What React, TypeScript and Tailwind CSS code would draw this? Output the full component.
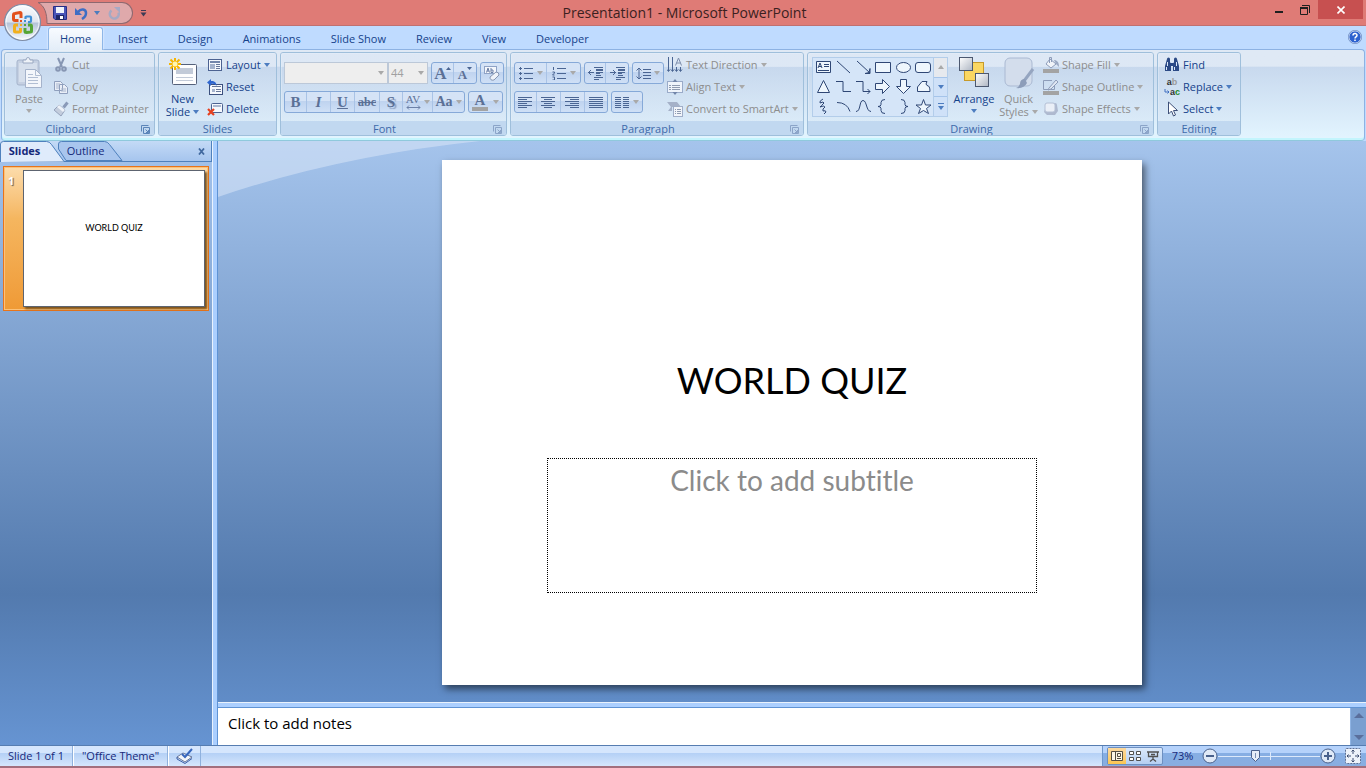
import { ReactNode } from "react";

const ink = "#4a6593";
const gray = "#8f9bb0";

function Caret({ color = "#4d7dc0" }: { color?: string }) {
  return (
    <svg width="6" height="4" viewBox="0 0 6 4" className="shrink-0">
      <path d="M0 0h6L3 4z" fill={color} />
    </svg>
  );
}

function Launcher({ color = "#8ba4c8" }: { color?: string }) {
  return (
    <svg width="9" height="9" viewBox="0 0 9 9" fill="none" stroke={color}>
      <path d="M.5 6.500V.5h7M2.500 8.500v-6h6v6zM4.500 4.500l3 3M7.500 5v2.500H5" />
    </svg>
  );
}

const icons: Record<string, ReactNode> = {
  cut: (
    <g fill="none" stroke="#8796b3" strokeWidth="2">
      <path d="M5 1l4 9M11 1L7 10" />
      <circle cx="5" cy="12" r="1.800" />
      <circle cx="11" cy="12" r="1.800" />
    </g>
  ),
  copy: (
    <g fill="#e9eef7" stroke="#8f9fbd">
      <path d="M1.500 2.500h6l2 2v7h-8zM6.500 5.500h5l3 3v6h-8z" />
      <path d="M3 5h4M3 7h3M3 9h3M8 10h5M8 12h5" stroke="#a9b6cd" />
    </g>
  ),
  painter: (
    <g>
      <path d="M14.500 1.500l-4 5" stroke="#8a9ab8" strokeWidth="3" />
      <path d="M6 4l6 5-4 6-7-6z" fill="#c3cddd" stroke="#96a3bc" />
      <path d="M6 4l6 5-2 2-6-5z" fill="#eef2f8" />
    </g>
  ),
  layout: (
    <g>
      <rect x="1.500" y="2.500" width="13" height="11" fill="#f5f8fd" stroke="#4c6291" />
      <path d="M3 5h10" stroke="#7386ab" strokeWidth="2" />
      <rect x="3" y="7" width="5" height="5" fill="#a5b3cd" />
      <path d="M9 7.500h4M9 9.500h4M9 11.500h4" stroke="#68789a" />
    </g>
  ),
  reset: (
    <g>
      <rect x="2.500" y="5.500" width="13" height="10" fill="#f5f8fd" stroke="#3c507e" />
      <path d="M5 7.500h9M9 10.500h5M9 12.500h5" stroke="#68789a" />
      <rect x="5" y="10" width="3" height="3" fill="#a5b3cd" />
      <path d="M0 3.500L4 0v2c4 0 5.500 1.500 5.500 5C8 5 7 4.500 4 5v2z" fill="#2f66cf" />
    </g>
  ),
  del: (
    <g>
      <rect x="4.500" y="2.500" width="11" height="9" rx="1" fill="#f5f8fd" stroke="#4c6291" />
      <path d="M6 5h8" stroke="#aab7cf" strokeWidth="2" />
      <path d="M1 8l6 6M7 8l-6 6" stroke="#e6401f" strokeWidth="2.200" />
    </g>
  ),
  textDir: (
    <g fill="none" stroke={ink}>
      <path d="M1.500 0v14M5.500 0v14M9.500 10v4M13.500 10v4" />
      <path d="M0 12.500l1.500 2 1.500-2M4 12.500l1.500 2 1.500-2M8 12.500l1.500 2 1.500-2M12 12.500l1.500 2 1.500-2" />
      <path d="M8.500 8.500L11.500 1l3 7.500M9.500 6h4" stroke="#7e8eac" />
    </g>
  ),
  alignText: (
    <g>
      <rect x=".5" y="2.500" width="15" height="11" fill="#eff4fb" stroke="#9aabc9" />
      <path d="M2 6.500h2M5 6.500h8M2 8.500h2M5 8.500h8M2 10.500h2M5 10.500h8" stroke={gray} />
      <path d="M5.500 3L8 0l2.500 3zM5.500 13L8 16l2.500-3z" fill="#7286aa" />
    </g>
  ),
  smartArt: (
    <g>
      <path d="M0 1h10l4 5H5v4H1l3-4z" fill="#a5b1c8" />
      <rect x="6.500" y="5.500" width="9" height="10" fill="#f2f5fa" stroke="#a0aec8" />
      <path d="M8 8.500h1M10 8.500h4M8 10.500h1M10 10.500h4M8 12.500h1M10 12.500h4" stroke={gray} />
    </g>
  ),
  fill: (
    <g>
      <path d="M7 2l6 5-5 4-5-4z" fill="#f1f4f9" stroke="#8d9cb9" />
      <path d="M6.500 6V.5h2V5" fill="none" stroke="#8d9cb9" />
      <path d="M11 3c3 0 5 2 5 7l-3-3z" fill="#9caac4" />
      <rect y="12" width="16" height="4" fill="#a3a3a3" />
    </g>
  ),
  outline: (
    <g>
      <path d="M9 1.500H.5v9h11V7" fill="none" stroke="#8d9cb9" />
      <path d="M6 9l7-8 2 2-7 7-3 1z" fill="#dfe6f1" stroke="#8d9cb9" />
      <rect y="12" width="16" height="4" fill="#a3a3a3" />
    </g>
  ),
  effects: (
    <g>
      <path d="M3 5l3-3h6q2 0 2 2l1 6-3 4H4l-3-3z" fill="#aeb9cf" />
      <rect x="2" y="2" width="10" height="9" rx="2" fill="#eaeff7" stroke="#b4c0d5" />
    </g>
  ),
  find: (
    <g fill="#2c4a86">
      <path d="M3 2h3v3l1 2v7H1V9zM10 2h3l2 7v5H9V7l1-2z" />
      <path d="M6 6h4v3H6z" />
      <path d="M3.500 5v4M12.500 5v4M2.500 10v3M10.500 10v3" stroke="#dbe6f7" />
      <circle cx="4.500" cy="2" r="1.500" />
      <circle cx="11.500" cy="2" r="1.500" />
    </g>
  ),
  select: (
    <path d="M4.500 1v12l3-3 2 5 2-1-2-4.500h4z" fill="#fff" stroke="#3e5078" />
  ),
};

function Icon({ name }: { name: string }) {
  return (
    <svg width="16" height="16" viewBox="0 0 16 16" className="shrink-0">
      {icons[name]}
    </svg>
  );
}

function ReplaceIcon() {
  return (
    <span className='flex w-4 shrink-0 flex-col font-["Liberation_Sans",sans-serif] text-[9px] leading-[10px] font-bold text-[#333]'>
      <span>
        a<span className="text-[#9a9a9a]">b</span>
      </span>
      <span className="flex items-center justify-between">
        <svg width="6" height="6" viewBox="0 0 6 6" className="shrink-0">
          <path d="M1 0v3h4M3.500 1.500L5 3 3.500 4.500" fill="none" stroke="#3f6fc0" />
        </svg>
        <span>
          a<span className="text-[#1f8a2a]">c</span>
        </span>
      </span>
    </span>
  );
}

function RowButton({
  icon,
  label,
  caret,
  disabled,
}: {
  icon: ReactNode;
  label: string;
  caret?: boolean;
  disabled?: boolean;
}) {
  return (
    <button
      type="button"
      disabled={disabled}
      className={`flex h-[22px] items-center gap-[3px] whitespace-nowrap ${
        disabled ? "text-[#8d8d8d]" : "text-[#15428b]"
      }`}
    >
      {icon}
      <span>{label}</span>
      {caret && <Caret color={disabled ? "#a9a9a9" : "#4d7dc0"} />}
    </button>
  );
}

function Group({
  title,
  width,
  launcher,
  children,
}: {
  title: string;
  width: string;
  launcher?: string;
  children: ReactNode;
}) {
  return (
    <section
      className={`flex shrink-0 flex-col overflow-hidden rounded-[3px] border border-[#9fbfdb] shadow-[inset_1px_1px_0_#eaf2fb] ${width}`}
    >
      <div className="flex h-[68px] shrink-0 bg-linear-to-b from-[#dce7f5]/60 from-20% via-[#c7d8ed]/60 via-21% to-[#d9e8f6]/60">
        {children}
      </div>
      <div className="flex flex-1 items-center bg-[#c1d8f0] leading-[16px] text-[#3e6aaa]">
        <h2 className={`flex-1 text-center ${launcher ? "pr-[5px]" : ""}`}>{title}</h2>
        {launcher && (
          <button type="button" aria-label={`${title} options`} className="mr-[4px]">
            <Launcher color={launcher} />
          </button>
        )}
      </div>
    </section>
  );
}

function Strip({ children, grow }: { children: ReactNode; grow?: string }) {
  return (
    <div
      className={`flex h-[22px] divide-x divide-[#a9c3e6] rounded-[3px] border border-[#86a9d8] bg-linear-to-b from-[#d5e3f6] from-45% via-[#bfd3ef] via-46% to-[#cfe0f6] ${
        grow ?? ""
      }`}
    >
      {children}
    </div>
  );
}

function Tool({
  label,
  width,
  caret,
  children,
}: {
  label: string;
  width: string;
  caret?: boolean;
  children: ReactNode;
}) {
  return (
    <button
      type="button"
      aria-label={label}
      disabled
      className={`flex items-center justify-center gap-[3px] font-["Liberation_Serif",serif] text-[15px] leading-none font-bold text-[#5b7096] ${width}`}
    >
      {children}
      {caret && <Caret color="#a9a9a9" />}
    </button>
  );
}

function Lines({ d }: { d: string }) {
  return (
    <svg width="15" height="13" viewBox="0 0 15 13" className="shrink-0">
      <path d={d} stroke={ink} fill="none" />
    </svg>
  );
}

function Combo({ label, value, width }: { label: string; value: string; width: string }) {
  return (
    <div className={`relative h-[22px] ${width}`}>
      <select
        aria-label={label}
        disabled
        className="h-full w-full appearance-none border border-[#bcc8d8] bg-[#eeeeee] px-[2px] text-[11px] text-[#a0a0a0] opacity-100"
      >
        <option>{value}</option>
      </select>
      <span className="pointer-events-none absolute top-[9px] right-[4px]">
        <Caret color="#a9a9a9" />
      </span>
    </div>
  );
}

function QuickAccess() {
  return (
    <div className="flex items-center">
      <svg width="10" height="22" viewBox="0 0 10 22">
        <path d="M0 .5h10v21H9C9 12 7 4 0 .5z" fill="#dfa9ab" />
        <path d="M10 .5H0C7 4 9 12 9 21.500h1" fill="none" stroke="#8e686f" />
      </svg>
      <div className="flex h-[22px] w-[85px] items-center rounded-r-full border-y border-r border-[#8e686f] bg-[#dfa9ab] pl-[5px]">
        <button type="button" aria-label="Save">
          <svg width="14" height="14" viewBox="0 0 14 14">
            <path d="M.5.5h13v13H2l-1.500-1.500z" fill="#4a55b8" stroke="#262f86" />
            <rect x="3" y="1" width="8" height="6" fill="#eef3fb" />
            <rect x="3" y="9" width="8" height="5" fill="#1f2766" />
            <rect x="7" y="10" width="3" height="3" fill="#fff" />
          </svg>
        </button>
        <button type="button" aria-label="Undo" className="ml-[8px] flex items-center gap-[6px]">
          <svg width="13" height="13" viewBox="0 0 13 13">
            <path d="M3 5C6 1 11 2 11 6c0 2.500-1.500 4.500-4 6" fill="none" stroke="#3e6ec4" strokeWidth="2.500" />
            <path d="M0 1v7h7z" fill="#3e6ec4" />
          </svg>
          <Caret color="#4b7cbd" />
        </button>
        <button type="button" aria-label="Repeat" className="ml-[8px]" disabled>
          <svg width="13" height="13" viewBox="0 0 13 13">
            <path d="M3.500 3.500a4.500 4.500 0 1 0 7 2" fill="none" stroke="#a6a9c4" strokeWidth="2.500" />
            <path d="M6 0h6v6z" fill="#a6a9c4" />
          </svg>
        </button>
      </div>
      <button type="button" aria-label="Customize toolbar" className="ml-[7px]">
        <svg width="7" height="8" viewBox="0 0 7 8">
          <path d="M1 1.500h5" stroke="#3d3b55" />
          <path d="M.5 3.500h6l-3 4z" fill="#3d3b55" />
        </svg>
      </button>
    </div>
  );
}

function OfficeButton() {
  return (
    <button type="button" aria-label="Office Button" className="absolute top-[3px] left-[3px] z-10">
      <svg width="40" height="40" viewBox="0 0 40 40">
        <defs>
          <linearGradient id="orb" x1="0" y1="0" x2="0" y2="1">
            <stop offset="0" stopColor="#fbfcfe" />
            <stop offset=".48" stopColor="#dfe5ef" />
            <stop offset=".52" stopColor="#b5c3d8" />
            <stop offset="1" stopColor="#f8fbff" />
          </linearGradient>
        </defs>
        <circle cx="19.500" cy="19.500" r="18" fill="url(#orb)" stroke="#7d8ca6" strokeWidth="1.200" />
        <circle cx="19.500" cy="19.500" r="16.500" fill="none" stroke="#fff" opacity=".8" />
        <g fill="none" strokeWidth="3">
          <path d="M18 15v-4.500q0-1-1-1l-5 1q-1.500 0-1.500 1.500V16q0 1.500 1.500 1.500h3.500" stroke="#e2501c" />
          <path d="M22.500 16v-2q0-.5 1-.5h3.500q1 0 1 1v3.500q0 1-1 1h-2" stroke="#3f8fd6" strokeWidth="2.200" />
          <path d="M15 22h-2.500q-1 0-1 1.500v4.500q0 1 1 1H16q1.500 0 1.500-1v-3" stroke="#f2b01e" />
          <path d="M25 22h2.500q1 0 1 1.500v4.500q0 1-1 1l-4 .5q-1.500 0-1.500-1V25" stroke="#55a536" />
        </g>
        <g>
          <rect x="17" y="17" width="2" height="2" fill="#e2501c" />
          <rect x="21" y="17" width="2" height="2" fill="#3f8fd6" />
          <rect x="17" y="21" width="2" height="2" fill="#f2b01e" />
          <rect x="21" y="21" width="2" height="2" fill="#55a536" />
        </g>
      </svg>
    </button>
  );
}

function TitleBar() {
  return (
    <header className="relative grid h-[26px] shrink-0 grid-cols-[1fr_auto_1fr] items-start border-b border-[#c0706f] bg-[#df7b76]">
      <OfficeButton />
      <div className="flex pt-[2px] pl-[38px]">
        <QuickAccess />
      </div>
      <h1 className="pl-[3px] text-[14px] leading-[26px] text-[#3b1f1f]">Presentation1 - Microsoft PowerPoint</h1>
      <div className="flex justify-end pr-[3px]">
        <button type="button" aria-label="Minimize" className="flex h-[19px] w-[26px] items-center justify-center">
          <svg width="8" height="8" viewBox="0 0 8 8">
            <path d="M0 5h8v2H0z" fill="#1f1f1f" />
          </svg>
        </button>
        <button type="button" aria-label="Restore" className="flex h-[19px] w-[26px] items-center justify-center">
          <svg width="10" height="10" viewBox="0 0 10 10">
            <path d="M2 .5h7.500V8M.5 3v6.500h7V3" fill="none" stroke="#1f1f1f" />
            <path d="M0 3h8" stroke="#1f1f1f" strokeWidth="2" />
          </svg>
        </button>
        <button type="button" aria-label="Close" className="flex h-[19px] w-[45px] items-center justify-center bg-[#c75050]">
          <svg width="8" height="8" viewBox="0 0 8 8">
            <path d="M.5.5l7 7M7.500.5l-7 7" stroke="#fff" strokeWidth="1.600" />
          </svg>
        </button>
      </div>
    </header>
  );
}

const tabs = ["Home", "Insert", "Design", "Animations", "Slide Show", "Review", "View", "Developer"];

function TabRow() {
  return (
    <nav className="flex h-[23px] shrink-0 items-end bg-[#bfdbff] pr-[4px] pl-[48px]">
      {tabs.map((tab, index) => (
        <button
          type="button"
          key={tab}
          className={`text-[11px] leading-[22px] text-[#15428b] ${
            index === 0
              ? "relative -mb-px h-[23px] rounded-t-[3px] border border-b-0 border-[#8fb7e8] bg-linear-to-b from-[#f8fbff] to-[#e3edf8] px-[11px] shadow-[0_0_2px_#fff]"
              : "h-[21px] px-[15px]"
          }`}
        >
          {tab}
        </button>
      ))}
      <button type="button" aria-label="Help" className="mb-[5px] ml-auto">
        <svg width="14" height="14" viewBox="0 0 14 14">
          <circle cx="7" cy="7" r="6.200" fill="#2d62cf" stroke="#e9f1fd" />
          <circle cx="7" cy="7" r="6.700" fill="none" stroke="#4b6fae" strokeWidth=".6" />
          <path d="M5 5.500C5 3 9 3 9 5.300 9 7 7 6.800 7 8.500M7 9.500V11" fill="none" stroke="#fff" strokeWidth="1.500" />
        </svg>
      </button>
    </nav>
  );
}

function ClipboardGroup() {
  return (
    <Group title="Clipboard" width="w-[151px]" launcher="#5a84b8">
      <button type="button" disabled className="flex w-[48px] flex-col items-center pt-[4px] text-[#8d8d8d]">
        <svg width="28" height="32" viewBox="0 0 28 32">
          <rect x="2" y="3" width="22" height="25" rx="2" fill="#c5d0e2" stroke="#a5b3cb" />
          <rect x="4" y="6" width="18" height="19" fill="#d6dfec" />
          <path d="M8 6V3h3q0-2.500 2-2.500T15 3h3v3z" fill="#eef2f8" stroke="#9aa8c1" />
          <path d="M10.500 12.500h10l6 6v12h-16z" fill="#f3f6fb" stroke="#a5b3cb" />
          <path d="M20.500 12.500v6h6M13 17.500h5M13 20.500h10M13 23.500h10M13 26.500h10" fill="none" stroke="#b1bed3" />
        </svg>
        <span className="leading-[20px]">Paste</span>
        <Caret color="#a9a9a9" />
      </button>
      <div className="flex flex-col pt-px">
        <RowButton disabled icon={<Icon name="cut" />} label="Cut" />
        <RowButton disabled icon={<Icon name="copy" />} label="Copy" />
        <RowButton disabled icon={<Icon name="painter" />} label="Format Painter" />
      </div>
    </Group>
  );
}

function SlidesGroup() {
  return (
    <Group title="Slides" width="w-[119px]">
      <button type="button" className="flex w-[47px] flex-col items-center pt-[4px] leading-[13px] text-[#15428b]">
        <svg width="30" height="30" viewBox="0 0 30 30">
          <rect x="4.500" y="7.500" width="24" height="20" rx="1" fill="#fdfdfe" stroke="#55617b" />
          <rect x="8" y="11" width="17" height="6" fill="#c2cad8" />
          <path d="M8 20.500h17M8 23.500h17" stroke="#c2cad8" />
          <path d="M7 1v12M1 7h12M2.500 2.500l9 9M11.500 2.500l-9 9" stroke="#f7b500" strokeWidth="2" />
          <circle cx="7" cy="7" r="2.500" fill="#fff6b0" />
        </svg>
        <span className="pt-[5px]">New</span>
        <span className="flex items-center gap-[3px]">
          Slide <Caret />
        </span>
      </button>
      <div className="flex flex-col pt-px pl-px">
        <RowButton icon={<Icon name="layout" />} label="Layout" caret />
        <RowButton icon={<Icon name="reset" />} label="Reset" />
        <RowButton icon={<Icon name="del" />} label="Delete" />
      </div>
    </Group>
  );
}

function FontGroup() {
  return (
    <Group title="Font" width="w-[227px]" launcher="#8ba4c8">
      <div className="flex flex-col gap-[7px] pt-[9px] pl-[3px]">
        <div className="flex">
          <Combo label="Font" value="" width="w-[104px]" />
          <Combo label="Font size" value="44" width="w-[40px]" />
          <Strip grow="ml-[3px]">
            <Tool label="Grow font" width="w-[22px]">
              <span className="text-[17px]">A</span>
              <svg width="5" height="8" viewBox="0 0 5 8" className="-ml-[4px] self-start">
                <path d="M0 7h5L2.500 4z" fill={ink} />
              </svg>
            </Tool>
            <Tool label="Shrink font" width="w-[22px]">
              <span className="pt-[3px] text-[13px]">A</span>
              <svg width="5" height="8" viewBox="0 0 5 8" className="-ml-[3px] self-start">
                <path d="M0 4h5L2.500 7z" fill={ink} />
              </svg>
            </Tool>
          </Strip>
          <Strip grow="ml-[3px]">
            <Tool label="Clear formatting" width="w-[22px]">
              <svg width="16" height="16" viewBox="0 0 16 16">
                <rect x=".5" y="1.500" width="12" height="7" fill="#f4f7fc" stroke="#8fa3c6" />
                <path d="M2.500 7.500L4 3l1.500 4.500M3 6h2M7 3v4.500h2V5H7" fill="none" stroke="#6b7fa6" />
                <path d="M6 12l6-5q3 0 3 3l-5 5q-4 1-4-3z" fill="#eef2f9" stroke="#8796b3" />
              </svg>
            </Tool>
          </Strip>
        </div>
        <div className="flex gap-[3px]">
          <Strip>
            <Tool label="Bold" width="w-[22px]">B</Tool>
            <Tool label="Italic" width="w-[24px]"><span className="italic">I</span></Tool>
            <Tool label="Underline" width="w-[24px]"><span className="underline">U</span></Tool>
            <Tool label="Strikethrough" width="w-[25px]"><span className="text-[12px] line-through">abc</span></Tool>
            <Tool label="Shadow" width="w-[23px]"><span className="text-shadow-[2px_2px_1px_#8fa3c6]">S</span></Tool>
            <Tool label="Character spacing" width="w-[30px]" caret>
              <span className="flex flex-col items-center text-[11px] font-normal">
                AV
                <svg width="15" height="5" viewBox="0 0 15 5">
                  <path d="M1 2.500h13M3 .5l-2 2 2 2M12 .5l2 2-2 2" fill="none" stroke="#6c81a8" />
                </svg>
              </span>
            </Tool>
            <Tool label="Change case" width="w-[31px]" caret><span className="text-[14px]">Aa</span></Tool>
          </Strip>
          <Strip>
            <Tool label="Font color" width="w-[33px]" caret>
              <span className="mr-[2px] flex flex-col items-center text-[15px] leading-[13px]">
                A
                <span className="h-[4px] w-[16px] bg-[#a3a3a3]" />
              </span>
            </Tool>
          </Strip>
        </div>
      </div>
    </Group>
  );
}

function ParagraphGroup() {
  return (
    <Group title="Paragraph" width="w-[294px]" launcher="#8ba4c8">
      <div className="flex w-[156px] flex-col gap-[7px] pt-[9px] pl-[3px]">
        <div className="flex gap-[3px]">
          <Strip>
            <Tool label="Bullets" width="w-[32px]" caret>
              <Lines d="M5 1.500h9M5 6.500h9M5 11.500h9M0 1.500h3M0 6.500h3M0 11.500h3M1.500 0v3M1.500 5v3M1.500 10v3" />
            </Tool>
            <Tool label="Numbering" width="w-[33px]" caret>
              <Lines d="M5 1.500h9M5 6.500h9M5 11.500h9M1.500 0v3M.5 5h2v1l-2 2h2M.5 10h2v3h-2" />
            </Tool>
          </Strip>
          <Strip>
            <Tool label="Decrease indent" width="w-[21px]">
              <Lines d="M6 .5h9M8 2.500h7M8 3.500h7M8 5.500h7M8 6.500h4M8 8.500h5M6 10.500h9M6 12.500h5M0 5.500h6M3 3L.5 5.500 3 8" />
            </Tool>
            <Tool label="Increase indent" width="w-[22px]">
              <Lines d="M6 .5h9M8 2.500h7M8 3.500h7M8 5.500h7M8 6.500h4M8 8.500h5M6 10.500h9M6 12.500h5M0 5.500h6M3 3l2.500 2.500L3 8" />
            </Tool>
          </Strip>
          <Strip>
            <Tool label="Line spacing" width="w-[30px]" caret>
              <Lines d="M7 2.500h8M7 5.500h8M7 8.500h8M7 11.500h8M3 1v11M.5 3.500L3 1l2.500 2.500M.5 9.500L3 12l2.500-2.500" />
            </Tool>
          </Strip>
        </div>
        <div className="flex gap-[3px]">
          <Strip>
            <Tool label="Align left" width="w-[22px]">
              <Lines d="M0 1.500h14M0 3.500h9M0 5.500h14M0 7.500h9M0 9.500h14M0 11.500h9" />
            </Tool>
            <Tool label="Center" width="w-[24px]">
              <Lines d="M0 1.500h14M3 3.500h8M0 5.500h14M3 7.500h8M0 9.500h14M3 11.500h8" />
            </Tool>
            <Tool label="Align right" width="w-[24px]">
              <Lines d="M0 1.500h14M5 3.500h9M0 5.500h14M5 7.500h9M0 9.500h14M5 11.500h9" />
            </Tool>
            <Tool label="Justify" width="w-[22px]">
              <Lines d="M0 1.500h14M0 3.500h14M0 5.500h14M0 7.500h14M0 9.500h14M0 11.500h14" />
            </Tool>
          </Strip>
          <Strip>
            <Tool label="Columns" width="w-[30px]" caret>
              <Lines d="M0 1.500h6M8 1.500h6M0 3.500h6M8 3.500h6M0 5.500h6M8 5.500h6M0 7.500h6M8 7.500h6M0 9.500h6M8 9.500h6M0 11.500h6M8 11.500h6" />
            </Tool>
          </Strip>
        </div>
      </div>
      <div className="flex flex-col pt-px">
        <RowButton disabled icon={<Icon name="textDir" />} label="Text Direction" caret />
        <RowButton disabled icon={<Icon name="alignText" />} label="Align Text" caret />
        <RowButton disabled icon={<Icon name="smartArt" />} label="Convert to SmartArt" caret />
      </div>
    </Group>
  );
}

const shapes: { name: string; d: string; filled?: boolean }[] = [
  { name: "Text box", d: "M1.500 2.500h14v11h-14zM3 9l2-5 2 5M4 7.500h2M9 5.500h5M9 7.500h5M3 11.500h11", filled: true },
  { name: "Line", d: "M2 2l13 12" },
  { name: "Arrow", d: "M2 2l13 12M15 9.500v5h-5l4-1z" },
  { name: "Rectangle", d: "M.5 3.500h15v10h-15z", filled: true },
  { name: "Oval", d: "M1.500 8.500a7 5 0 1 0 14 0a7 5 0 1 0-14 0z", filled: true },
  { name: "Rounded rectangle", d: "M3 3.500h10q2.500 0 2.500 2.500v5q0 2.500-2.500 2.500H3q-2.500 0-2.500-2.500V6q0-2.500 2.500-2.500z", filled: true },
  { name: "Triangle", d: "M8.500 2.500l6 12h-12z", filled: true },
  { name: "Elbow", d: "M1 3.500h7v10h8" },
  { name: "Elbow arrow", d: "M1 3.500h7v10h7M12.500 11l2.500 2.500-2.500 2.500" },
  { name: "Right arrow", d: "M.5 5.500h7v-4l7 7-7 7v-4h-7z", filled: true },
  { name: "Down arrow", d: "M5.500 1.500h6v7h4l-7 7-7-7h4z", filled: true },
  { name: "Freeform", d: "M7 3.500h5q-2 3 0 4 3 0 3 6H2.500V9z", filled: true },
  { name: "Scribble", d: "M8 1Q4 3 5 5q4-2 4 0-3 3-4 4 4-2 5 0-3 2-2 4 3-1 3 1l-2 2" },
  { name: "Arc", d: "M2 4.500q10 0 13 9" },
  { name: "Curve", d: "M1 13.500c5 0 3-11 7-11s3 11 8 11" },
  { name: "Left brace", d: "M10 1.500q-4 0-4 3v2q0 2-3 2 3 0 3 2v2q0 3 4 3" },
  { name: "Right brace", d: "M6 1.500q4 0 4 3v2q0 2 3 2-3 0-3 2v2q0 3-4 3" },
  { name: "Star", d: "M8.500 1.500l2 5.500h5.500l-4.500 3.500 2 5-5-3-5 3 2-5L1 7h5.500z", filled: true },
];

function DrawingGroup() {
  return (
    <Group title="Drawing" width="w-[347px]" launcher="#8ba4c8">
      <div className="mt-[4px] ml-[4px] flex h-[60px] border border-[#b3cdea] bg-[#d5e5f8]">
        <div className="grid grid-cols-6">
          {shapes.map((shape) => (
            <button type="button" key={shape.name} aria-label={shape.name} className="flex h-[19px] w-[20px] items-center justify-center">
              <svg width="17" height="17" viewBox="0 0 17 17">
                <path d={shape.d} fill={shape.filled ? "#eef6fd" : "none"} stroke="#2f4775" />
              </svg>
            </button>
          ))}
        </div>
        <div className="flex w-[14px] flex-col divide-y divide-[#a5c4ea] border-l border-[#b3cdea]">
          <button type="button" aria-label="Scroll up" className="flex flex-1 items-center justify-center bg-[#e6e9ee]">
            <span className="rotate-180"><Caret color="#a9a9a9" /></span>
          </button>
          <button type="button" aria-label="Scroll down" className="flex flex-1 items-center justify-center bg-[#cfe1f8]">
            <Caret />
          </button>
          <button type="button" aria-label="More shapes" className="flex flex-1 flex-col items-center justify-center gap-[2px] bg-[#cfe1f8]">
            <span className="h-px w-[6px] bg-[#4d7dc0]" />
            <Caret />
          </button>
        </div>
      </div>
      <button type="button" className="ml-px flex w-[50px] flex-col items-center pt-[4px] text-[#15428b]">
        <svg width="32" height="31" viewBox="0 0 32 31">
          <defs>
            <linearGradient id="tile" x1="0" y1="0" x2="1" y2="1">
              <stop offset="0" stopColor="#fff" />
              <stop offset="1" stopColor="#aeb6c3" />
            </linearGradient>
          </defs>
          <rect x="6.500" y="5.500" width="19" height="18" fill="#fbd762" stroke="#c79a29" />
          <rect x="1.500" y=".5" width="13" height="13" fill="url(#tile)" stroke="#4b5870" />
          <rect x="17.500" y="16.500" width="13" height="13" fill="url(#tile)" stroke="#4b5870" />
        </svg>
        <span className="leading-[21px]">Arrange</span>
        <Caret />
      </button>
      <button type="button" disabled className="flex w-[39px] flex-col items-center pt-[4px] leading-[13px] whitespace-nowrap text-[#8d8d8d]">
        <svg width="32" height="32" viewBox="0 0 32 32">
          <rect x="2" y="1" width="27" height="28" rx="5" fill="#d3ddec" stroke="#aab9d2" />
          <path d="M30 12l-9 12" stroke="#95a5c0" strokeWidth="3" />
          <path d="M22 22q-5 0-5 5-1 3-4 4 8 1 11-5z" fill="#8d9db9" />
        </svg>
        <span className="pt-[3px]">Quick</span>
        <span className="flex items-center gap-[3px]">
          Styles <Caret color="#a9a9a9" />
        </span>
      </button>
      <div className="flex flex-col pt-px pl-[5px]">
        <RowButton disabled icon={<Icon name="fill" />} label="Shape Fill" caret />
        <RowButton disabled icon={<Icon name="outline" />} label="Shape Outline" caret />
        <RowButton disabled icon={<Icon name="effects" />} label="Shape Effects" caret />
      </div>
    </Group>
  );
}

function Ribbon() {
  return (
    <div className="flex shrink-0 bg-[#bfdbff] px-px">
      <div className="flex h-[92px] flex-1 gap-[3px] rounded-[4px] border border-[#8db2e3] border-b-[#8fc9dc] bg-linear-to-b from-[#dfe9f5] from-18% via-[#c8d9ee] via-19% to-[#e3f5ff] px-[2px] pt-[2px] pb-[4px] text-[11px] shadow-[inset_0_-2px_0_#c3f5fd]">
        <ClipboardGroup />
        <SlidesGroup />
        <FontGroup />
        <ParagraphGroup />
        <DrawingGroup />
        <Group title="Editing" width="w-[84px]">
          <div className="flex flex-col pt-px pl-[6px]">
            <RowButton icon={<Icon name="find" />} label="Find" />
            <RowButton icon={<ReplaceIcon />} label="Replace" caret />
            <RowButton icon={<Icon name="select" />} label="Select" caret />
          </div>
        </Group>
      </div>
    </div>
  );
}

function SlidesPane() {
  return (
    <aside className="flex w-[212px] shrink-0 flex-col">
      <div className="flex h-[21px] items-center border-r border-b border-[#4f81bd] bg-linear-to-b from-[#c4daf6] to-[#a6c5ee] pr-[6px] text-[11px] text-[#15297a]">
        <button type="button" className="relative h-full w-[58px] font-bold">
          <svg width="66" height="21" viewBox="0 0 66 21" className="absolute top-0 left-0 z-10">
            <path d="M0 21V3q0-2.500 3-2.500h43q3 0 5 3L64 20.500z" fill="#dfebfb" />
            <path d="M.5 21V3q0-2.500 3-2.500h43q3 0 5 3L64 20.500" fill="none" stroke="#4f81bd" />
          </svg>
          <span className="relative z-10 mr-[9px]">Slides</span>
        </button>
        <button type="button" className="relative h-full w-[65px]">
          <svg width="66" height="21" viewBox="0 0 66 21" className="absolute top-0 left-0">
            <path d="M.5 8V3q0-2.500 3-2.500h43q3 0 5 3L64 19.500H8z" fill="#a9c6ee" stroke="#4f81bd" />
          </svg>
          <span className="relative mr-[10px]">Outline</span>
        </button>
        <button type="button" aria-label="Close pane" className="ml-auto">
          <svg width="7" height="7" viewBox="0 0 7 7">
            <path d="M1 .5l5 6M6 .5l-5 6" stroke="#41699f" strokeWidth="1.800" />
          </svg>
        </button>
      </div>
      <div className="mx-[3px] mt-[4px] flex gap-[7px] border border-[#e8741a] bg-linear-to-b from-[#fcdcab] via-[#f5b65f] via-36% to-[#ef9a35] py-[3px] pr-[3px] pl-[4px] shadow-[inset_0_0_0_1px_#fbc27a]">
        <span className="w-[8px] pt-[3px] text-[11px] leading-[16px] font-bold text-white text-shadow-[1px_1px_1px_#555]">1</span>
        <div className="flex aspect-4/3 flex-1 items-start justify-center border border-[#5d6470] bg-white pt-[50px] font-[Lato,sans-serif] text-[9px] leading-[14px] text-black shadow-[2px_2px_2px_#7b5420]">
          WORLD QUIZ
        </div>
      </div>
    </aside>
  );
}

function Workspace() {
  return (
    <main className="flex min-w-0 flex-1 flex-col border-l border-[#5f93d4]">
      <div className="relative flex min-h-0 flex-1 justify-center pt-[19px] pb-[17px]">
        <svg width="262" height="56" viewBox="0 0 262 56" className="absolute top-0 left-0">
          <path d="M0 0h262Q120 15 0 56z" fill="#d9e6f8" opacity=".55" />
        </svg>
        <article className="relative grid aspect-4/3 h-full grid-rows-[163fr_113fr_22fr_135fr_92fr] bg-white font-[Lato,sans-serif] shadow-[3px_4px_7px_#0008]">
          <h2 className="row-start-2 flex items-center justify-center text-[36px] text-black">WORLD QUIZ</h2>
          <div className="row-start-4 mx-[15%] border border-dotted border-black pt-[3px] text-center text-[28px] leading-[36px] text-[#8b8b8b] [font-variant-ligatures:none]">
            Click to add subtitle
          </div>
        </article>
      </div>
      <div className="h-[6px] shrink-0 border-t border-b border-t-[#e9f2fd] border-b-[#5f93d4] bg-[#abcfff]" />
      <div className="flex h-[37px] shrink-0">
        <textarea
          aria-label="Notes"
          placeholder="Click to add notes"
          className="min-w-0 flex-1 resize-none overflow-hidden bg-white px-[10px] py-[5px] text-[15px] leading-[20px] placeholder:text-black"
        />
        <div className="flex w-[16px] flex-col items-center justify-between border-l border-[#8fb4e4] bg-[#7a9fd0] py-[5px]">
          <svg width="10" height="5" viewBox="0 0 10 5">
            <path d="M0 5h10L5 0z" fill="#5a6f9c" />
          </svg>
          <svg width="10" height="5" viewBox="0 0 10 5">
            <path d="M0 0h10L5 5z" fill="#5a6f9c" />
          </svg>
        </div>
      </div>
    </main>
  );
}

function StatusBar() {
  return (
    <footer className="flex h-[23px] shrink-0 items-stretch border-t border-b-2 border-t-[#567db1] border-b-[#a36f7d] bg-linear-to-b from-[#d5e6fd] from-35% via-[#b4d0f6] via-36% to-[#d6e7fc] text-[11px] leading-[20px] text-[#15297a]">
      <span className="border-r border-[#8fb1dd] px-[8px]">Slide 1 of 1</span>
      <span className="border-r border-l border-r-[#8fb1dd] border-l-white px-[8px]">"Office Theme"</span>
      <button type="button" aria-label="Spelling" className="flex items-center border-r border-l border-r-[#8fb1dd] border-l-white px-[7px]">
        <svg width="17" height="16" viewBox="0 0 17 16">
          <path d="M1 9l6-4 9 4-7 5z" fill="#f4f6fa" stroke="#67779b" />
          <path d="M1 9v2l8 4.500 7-5" fill="none" stroke="#3c5fa8" />
          <path d="M6 6l3 3 7-8" fill="none" stroke="#3867bd" strokeWidth="2" />
        </svg>
      </button>
      <div className="ml-auto flex items-center border-l border-[#6f97cb] bg-linear-to-b from-[#b5d2fb] from-35% via-[#86aee4] via-36% to-[#89aee0] pr-[5px] pl-[4px]">
        <div className="flex h-[18px] rounded-[2px] border border-[#6d8fc0] bg-linear-to-b from-[#dce9fa] to-[#b5cff2]">
          <button type="button" aria-label="Normal view" className="flex w-[18px] items-center justify-center bg-linear-to-b from-[#fbd9a0] to-[#fbc650]">
            <svg width="12" height="11" viewBox="0 0 12 11">
              <path d="M.5.5h11v9H.5zM4.500.5v9M6.500 2.500h3v3h-3zM6 7.500h4" fill="#fff8e5" stroke="#554f42" />
            </svg>
          </button>
          <button type="button" aria-label="Slide sorter" className="flex w-[18px] items-center justify-center">
            <svg width="12" height="10" viewBox="0 0 12 10">
              <path d="M.5.5h4v3h-4zM7.500.5h4v3h-4zM.5 6.500h4v3h-4zM7.500 6.500h4v3h-4z" fill="#fff" stroke="#505050" />
            </svg>
          </button>
          <button type="button" aria-label="Slide show" className="flex w-[18px] items-center justify-center">
            <svg width="12" height="11" viewBox="0 0 12 11">
              <path d="M0 1h12M1.500 1.500v4h9v-4M4 3.500h4M6 5.500v3M3 10.500L6 8l3 2.500" fill="none" stroke="#505050" strokeWidth="1.300" />
            </svg>
          </button>
        </div>
        <span className="w-[39px] text-center">73%</span>
        <button type="button" aria-label="Zoom out">
          <svg width="16" height="16" viewBox="0 0 16 16">
            <circle cx="8" cy="8" r="7" fill="#dfe9f7" stroke="#49618c" />
            <path d="M4 8h8" stroke="#49618c" strokeWidth="2" />
          </svg>
        </button>
        <div className="relative h-[16px] w-[102px]">
          <svg width="102" height="16" viewBox="0 0 102 16">
            <path d="M0 8.500h102" stroke="#dce9fb" />
            <path d="M52.500 4v8" stroke="#dce9fb" />
            <path d="M33.500 2.500h8v7l-4 4-4-4z" fill="#e5ecf7" stroke="#49618c" />
            <path d="M37.500 5v5" stroke="#7a90b5" />
          </svg>
          <input type="range" aria-label="Zoom" min="10" max="400" defaultValue="73" className="absolute inset-0 h-full w-full opacity-0" />
        </div>
        <button type="button" aria-label="Zoom in">
          <svg width="16" height="16" viewBox="0 0 16 16">
            <circle cx="8" cy="8" r="7" fill="#dfe9f7" stroke="#49618c" />
            <path d="M4 8h8M8 4v8" stroke="#49618c" strokeWidth="2" />
          </svg>
        </button>
        <button type="button" aria-label="Fit slide to window" className="ml-[9px]">
          <svg width="16" height="16" viewBox="0 0 16 16">
            <rect x=".5" y=".5" width="15" height="15" rx="1" fill="#edf2fa" stroke="#5c6f94" strokeDasharray="2 1" />
            <path d="M8 2v4M6.500 3.500L8 2l1.500 1.500M8 14v-4M6.500 12.500L8 14l1.500-1.500M2 8h4M3.500 6.500L2 8l1.500 1.500M14 8h-4M12.500 6.500L14 8l-1.500 1.500" fill="none" stroke="#3d4d70" />
          </svg>
        </button>
      </div>
    </footer>
  );
}

export default function App() {
  return (
    <div className="flex h-screen flex-col overflow-hidden font-['Open_Sans','Noto_Sans',sans-serif]">
      <TitleBar />
      <TabRow />
      <Ribbon />
      <div className="flex min-h-0 flex-1 bg-linear-to-b from-[#a5c4ec] via-[#537aae] via-75% to-[#6694d2]">
        <SlidesPane />
        <div className="w-[5px] shrink-0 border-l border-[#e9f2fd] bg-[#abcfff]" />
        <Workspace />
      </div>
      <StatusBar />
    </div>
  );
}
